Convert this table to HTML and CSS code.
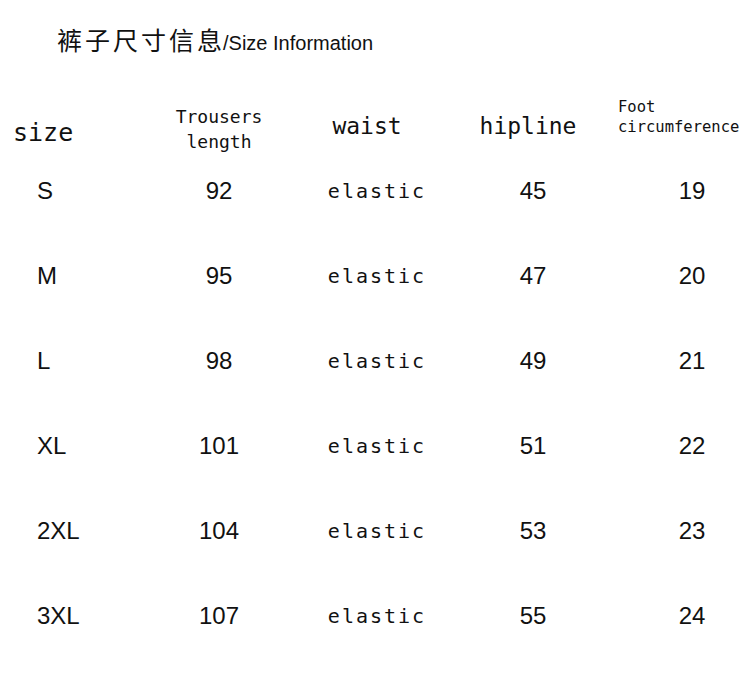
FILE: index.html
```html
<!DOCTYPE html>
<html lang="zh">
<head>
<meta charset="utf-8">
<title>Size Information</title>
<link rel="stylesheet" href="styles.css">
</head>
<body>
<div class="page">
  <h1 class="title"><span class="title-cn">裤子尺寸信息</span><span class="title-en">/Size Information</span></h1>
  <div class="table">
    <div class="hd hd-size">size</div>
    <div class="hd hd-len">Trousers<br>length</div>
    <div class="hd hd-waist">waist</div>
    <div class="hd hd-hip">hipline</div>
    <div class="hd hd-foot">Foot<br>circumference</div>

    <div class="c c1">S</div><div class="c c2">92</div><div class="c c3">elastic</div><div class="c c4">45</div><div class="c c5">19</div>
    <div class="c c1">M</div><div class="c c2">95</div><div class="c c3">elastic</div><div class="c c4">47</div><div class="c c5">20</div>
    <div class="c c1">L</div><div class="c c2">98</div><div class="c c3">elastic</div><div class="c c4">49</div><div class="c c5">21</div>
    <div class="c c1">XL</div><div class="c c2">101</div><div class="c c3">elastic</div><div class="c c4">51</div><div class="c c5">22</div>
    <div class="c c1">2XL</div><div class="c c2">104</div><div class="c c3">elastic</div><div class="c c4">53</div><div class="c c5">23</div>
    <div class="c c1">3XL</div><div class="c c2">107</div><div class="c c3">elastic</div><div class="c c4">55</div><div class="c c5">24</div>
  </div>
</div>
</body>
</html>
```
FILE: styles.css
```css
html, body {
  margin: 0;
  padding: 0;
  background: #ffffff;
}
.page {
  width: 750px;
  height: 683px;
  color: #111111;
  overflow: hidden;
}
.title {
  margin: 0;
  padding: 24px 0 0 57px;
  height: 95px;
  box-sizing: border-box;
  font-weight: normal;
  line-height: 30px;
  white-space: nowrap;
}
.title-cn {
  font-family: "Noto Sans CJK SC", sans-serif;
  font-size: 25px;
  letter-spacing: 3px;
  margin-right: -2px;
}
.title-en {
  font-family: "Liberation Sans", Arial, sans-serif;
  font-size: 20px;
}
.table {
  display: grid;
  grid-template-columns: 140px 158px 156px 158px 138px;
  grid-template-rows: 60px repeat(6, 85px);
}
.hd {
  font-family: "DejaVu Sans Mono", monospace;
  white-space: nowrap;
}
.hd-size {
  font-size: 25px;
  line-height: 30px;
  padding: 23px 0 0 13px;
}
.hd-len {
  font-size: 18px;
  line-height: 25px;
  padding-top: 9px;
  text-align: center;
}
.hd-waist {
  font-size: 23px;
  line-height: 28px;
  padding: 17px 18px 0 0;
  text-align: center;
}
.hd-hip {
  font-size: 23px;
  line-height: 28px;
  padding: 17px 10px 0 0;
  text-align: center;
}
.hd-foot {
  font-size: 15.5px;
  line-height: 20px;
  padding: 2px 0 0 6px;
}
.c {
  font-family: "Liberation Sans", Arial, sans-serif;
  font-size: 24px;
  line-height: 28px;
  padding-top: 22px;
  white-space: nowrap;
}
.c1 {
  padding-left: 37px;
}
.c2 {
  text-align: center;
}
.c3 {
  font-family: "DejaVu Sans Mono", monospace;
  font-size: 20px;
  letter-spacing: 2px;
  text-align: center;
  padding-left: 2px;
}
.c4 {
  text-align: center;
}
.c5 {
  text-align: center;
  padding-left: 22px;
}
```
